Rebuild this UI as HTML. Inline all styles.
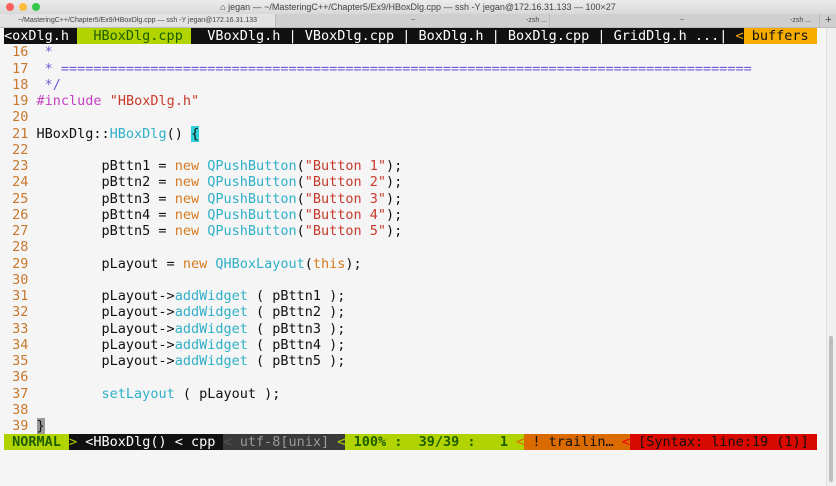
<!DOCTYPE html>
<html><head><meta charset="utf-8"><style>
html,body{margin:0;padding:0;width:836px;height:486px;overflow:hidden;background:#f5f5f5;}
.title{position:absolute;left:0;top:0;width:836px;height:14px;background:linear-gradient(#ececec,#d8d8d8);font:9px "Liberation Sans",sans-serif;color:#444;text-align:center;line-height:14px;}
.dot{position:absolute;top:3px;width:8px;height:8px;border-radius:50%;}
.tabs{position:absolute;left:0;top:14px;width:836px;height:13px;background:#cfcfcf;border-bottom:1px solid #bbb;font:7px "Liberation Sans",sans-serif;color:#444;line-height:13px;}
.tab{position:absolute;top:0;height:13px;text-align:center;border-left:1px solid #bbb;}
.term{position:absolute;left:4px;top:28px;font-family:"DejaVu Sans Mono",monospace;font-size:13.5px;line-height:16.26px;color:#111;}
.row{height:16.26px;white-space:pre;}
.n{color:#c8772d}.c{color:#6d5ed8}.p{color:#c43fc1}.s{color:#c83a2c}.k{color:#d67a1f}.t{color:#2fb0c8}
.tl{background:#111;color:#fff}
.side{position:absolute;left:826px;top:28px;width:10px;height:458px;background:#f0f0f0;border-left:1px solid #e0e0e0;}
.thumb{position:absolute;left:829px;top:336px;width:4px;height:146px;background:#bdbdbd;border-radius:2px;}
</style></head><body>
<div class="title"><span class="dot" style="left:6px;background:#fc605c"></span><span class="dot" style="left:19px;background:#fdbc40"></span><span class="dot" style="left:32px;background:#34c84a"></span>⌂ jegan — ~/MasteringC++/Chapter5/Ex9/HBoxDlg.cpp — ssh -Y jegan@172.16.31.133 — 100×27</div>
<div class="tabs">
<div class="tab" style="left:0;width:275px;background:#e2e2e2;border-left:none">~/MasteringC++/Chapter5/Ex9/HBoxDlg.cpp — ssh -Y jegan@172.16.31.133</div>
<div class="tab" style="left:275px;width:274px"><span style="position:absolute;left:250px">-zsh ...</span><span style="position:absolute;left:135px">~</span></div>
<div class="tab" style="left:549px;width:270px"><span style="position:absolute;left:130px">~</span><span style="position:absolute;left:240px">-zsh ...</span></div>
<div class="tab" style="left:819px;width:17px;font-size:11px">+</div>
</div>
<div class="side"></div><div class="thumb"></div>
<div class="term"><div class="row"><span class="tl">&lt;oxDlg.h </span><span style="background:#b1d400;color:#1d5c00">  HBoxDlg.cpp </span><span class="tl">  VBoxDlg.h | VBoxDlg.cpp | BoxDlg.h | BoxDlg.cpp | GridDlg.h ...| </span><span style="background:#111;color:#f5a800">&lt;</span><span style="background:#f7ad00;color:#111"> buffers </span></div>
<div class="row"><span class="n"> 16 </span><span class="c"> *</span></div>
<div class="row"><span class="n"> 17 </span><span class="c"> * =====================================================================================</span></div>
<div class="row"><span class="n"> 18 </span><span class="c"> */</span></div>
<div class="row"><span class="n"> 19 </span><span class="p">#include</span> <span class="s">"HBoxDlg.h"</span></div>
<div class="row"><span class="n"> 20 </span></div>
<div class="row"><span class="n"> 21 </span>HBoxDlg::<span class="t">HBoxDlg</span>() <span style="background:#2fd0d8">{</span></div>
<div class="row"><span class="n"> 22 </span></div>
<div class="row"><span class="n"> 23 </span>        pBttn1 = <span class="k">new</span> <span class="t">QPushButton</span>(<span class="s">"Button 1"</span>);</div>
<div class="row"><span class="n"> 24 </span>        pBttn2 = <span class="k">new</span> <span class="t">QPushButton</span>(<span class="s">"Button 2"</span>);</div>
<div class="row"><span class="n"> 25 </span>        pBttn3 = <span class="k">new</span> <span class="t">QPushButton</span>(<span class="s">"Button 3"</span>);</div>
<div class="row"><span class="n"> 26 </span>        pBttn4 = <span class="k">new</span> <span class="t">QPushButton</span>(<span class="s">"Button 4"</span>);</div>
<div class="row"><span class="n"> 27 </span>        pBttn5 = <span class="k">new</span> <span class="t">QPushButton</span>(<span class="s">"Button 5"</span>);</div>
<div class="row"><span class="n"> 28 </span></div>
<div class="row"><span class="n"> 29 </span>        pLayout = <span class="k">new</span> <span class="t">QHBoxLayout</span>(<span class="k">this</span>);</div>
<div class="row"><span class="n"> 30 </span></div>
<div class="row"><span class="n"> 31 </span>        pLayout-&gt;<span class="t">addWidget</span> ( pBttn1 );</div>
<div class="row"><span class="n"> 32 </span>        pLayout-&gt;<span class="t">addWidget</span> ( pBttn2 );</div>
<div class="row"><span class="n"> 33 </span>        pLayout-&gt;<span class="t">addWidget</span> ( pBttn3 );</div>
<div class="row"><span class="n"> 34 </span>        pLayout-&gt;<span class="t">addWidget</span> ( pBttn4 );</div>
<div class="row"><span class="n"> 35 </span>        pLayout-&gt;<span class="t">addWidget</span> ( pBttn5 );</div>
<div class="row"><span class="n"> 36 </span></div>
<div class="row"><span class="n"> 37 </span>        <span class="t">setLayout</span> ( pLayout );</div>
<div class="row"><span class="n"> 38 </span></div>
<div class="row"><span class="n"> 39 </span><span style="background:#9a9a9a">}</span></div>
<div class="row"><span style="background:#b1d400;color:#1d5c00;font-weight:bold"> NORMAL </span><span style="background:#111;color:#b1d400">&gt;</span><span class="tl"> &lt;HBoxDlg() &lt; cpp </span><span style="background:#3a3a3a;color:#555">&lt;</span><span style="background:#3a3a3a;color:#9a9a9a"> utf-8[unix] </span><span style="background:#3a3a3a;color:#b1d400">&lt;</span><span style="background:#b1d400;color:#1d5c00;font-weight:bold"> 100% :  39/39 :   1 </span><span style="background:#b1d400;color:#e06000">&lt;</span><span style="background:#db6a00;color:#111"> ! trailin… </span><span style="background:#db6a00;color:#e00">&lt;</span><span style="background:#d80a00;color:#111"> [Syntax: line:19 (1)] </span></div>
</div>
</body></html>
